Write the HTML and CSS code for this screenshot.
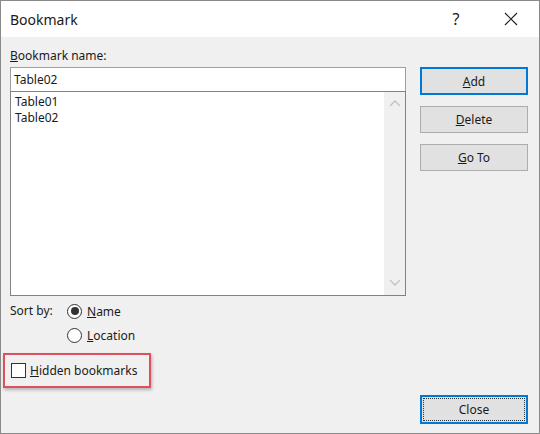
FILE: index.html
```html
<!DOCTYPE html>
<html>
<head>
  <title>Bookmark</title>
  <link rel="stylesheet" href="styles.css">
</head>
<body>
  <div class="dialog">
    <div class="titlebar">
      <span class="title">Bookmark</span>
      <span class="help">?</span>
      <span class="close-x">
        <svg width="14" height="14" viewBox="0 0 14 14"><path d="M1 1 L13 13 M13 1 L1 13" stroke="#222" stroke-width="1.2" fill="none"/></svg>
      </span>
    </div>

    <div class="content">
      <div class="left">
        <div class="label"><u>B</u>ookmark name:</div>
        <div class="name-input">Table02</div>
        <div class="list">
          <div class="items">
            <div>Table01</div>
            <div>Table02</div>
          </div>
          <div class="scrollbar">
            <svg width="12" height="8" viewBox="0 0 12 8"><path d="M1 7 L6 2 L11 7" stroke="#c2c2c2" stroke-width="1.3" fill="none"/></svg>
            <svg width="12" height="8" viewBox="0 0 12 8"><path d="M1 1 L6 6 L11 1" stroke="#c2c2c2" stroke-width="1.3" fill="none"/></svg>
          </div>
        </div>

        <div class="sort">
          <span class="sort-label">Sort by:</span>
          <div class="radios">
            <div class="radio-row"><span class="radio checked"></span><span><u>N</u>ame</span></div>
            <div class="radio-row"><span class="radio"></span><span><u>L</u>ocation</span></div>
          </div>
        </div>

        <div class="hidden-box">
          <span class="checkbox"></span>
          <span><u>H</u>idden bookmarks</span>
        </div>
      </div>

      <div class="right">
        <div class="btn default"><u>A</u>dd</div>
        <div class="btn"><u>D</u>elete</div>
        <div class="btn"><u>G</u>o To</div>
        <div class="spacer"></div>
        <div class="btn default focus"><span class="focus-ring">Close</span></div>
      </div>
    </div>
  </div>
</body>
</html>
```

FILE: styles.css
```css
body {
  margin: 0;
  padding: 0;
  font-family: "Noto Sans", "Open Sans", sans-serif;
  font-size: 12px;
  color: #1a1a1a;
}

.dialog {
  width: 540px;
  height: 434px;
  box-sizing: border-box;
  border: 1px solid #8a8a8a;
  background-color: #f0f0f0;
  display: flex;
  flex-direction: column;
}

.titlebar {
  height: 36px;
  background-color: #fff;
  display: flex;
  align-items: center;
}

.title {
  font-size: 14px;
  margin-left: 9px;
  flex: 1;
}

.help {
  font-size: 16px;
  width: 20px;
  text-align: center;
  margin-right: 38px;
}

.close-x {
  display: flex;
  margin-right: 21px;
}

.content {
  flex: 1;
  display: flex;
  padding: 0 10px 9px 9px;
}

.left {
  width: 396px;
  display: flex;
  flex-direction: column;
}

.label {
  margin-top: 9px;
  height: 20px;
  line-height: 20px;
}

.name-input {
  margin-top: 1px;
  height: 24px;
  line-height: 24px;
  box-sizing: border-box;
  border: 1px solid #a0a0a0;
  border-bottom: none;
  background-color: #fff;
  padding-left: 3px;
}

.list {
  height: 205px;
  box-sizing: border-box;
  border: 1px solid #828282;
  background-color: #fff;
  display: flex;
}

.items {
  flex: 1;
  padding: 2px 0 0 4px;
  line-height: 16px;
}

.scrollbar {
  width: 21px;
  background-color: #f0f0f0;
  display: flex;
  flex-direction: column;
  justify-content: space-between;
  align-items: center;
  padding: 7px 0 8px;
}

.sort {
  display: flex;
  margin-top: 6px;
}

.sort-label {
  width: 57px;
  line-height: 18px;
}

.radio-row {
  display: flex;
  align-items: center;
  gap: 5px;
  height: 18px;
  margin-bottom: 6px;
}

.radio {
  width: 13px;
  height: 13px;
  border: 1px solid #333;
  border-radius: 50%;
  background-color: #fff;
  display: flex;
  align-items: center;
  justify-content: center;
}

.radio.checked::after {
  content: "";
  width: 8px;
  height: 8px;
  border-radius: 50%;
  background-color: #333;
}

.hidden-box {
  margin: 3px 0 0 -7px;
  width: 148px;
  height: 35px;
  box-sizing: border-box;
  border: 2px solid #e0505c;
  box-shadow: 1px 2px 3px rgba(0, 0, 0, 0.25);
  display: flex;
  align-items: center;
  gap: 4px;
  padding-left: 6px;
}

.checkbox {
  width: 13px;
  height: 13px;
  border: 1px solid #333;
  background-color: #fff;
}

.right {
  margin-left: 14px;
  width: 108px;
  display: flex;
  flex-direction: column;
  gap: 11px;
  padding-top: 30px;
}

.btn {
  height: 27px;
  box-sizing: border-box;
  border: 1px solid #adadad;
  background-color: #e1e1e1;
  display: flex;
  align-items: center;
  justify-content: center;
}

.btn.default {
  border: 2px solid #0078d7;
  height: 28px;
}

.spacer {
  flex: 1;
}

.btn.focus {
  height: 29px;
  padding: 1px;
}

.focus-ring {
  flex: 1;
  align-self: stretch;
  border: 1px dotted #333;
  display: flex;
  align-items: center;
  justify-content: center;
}
```
